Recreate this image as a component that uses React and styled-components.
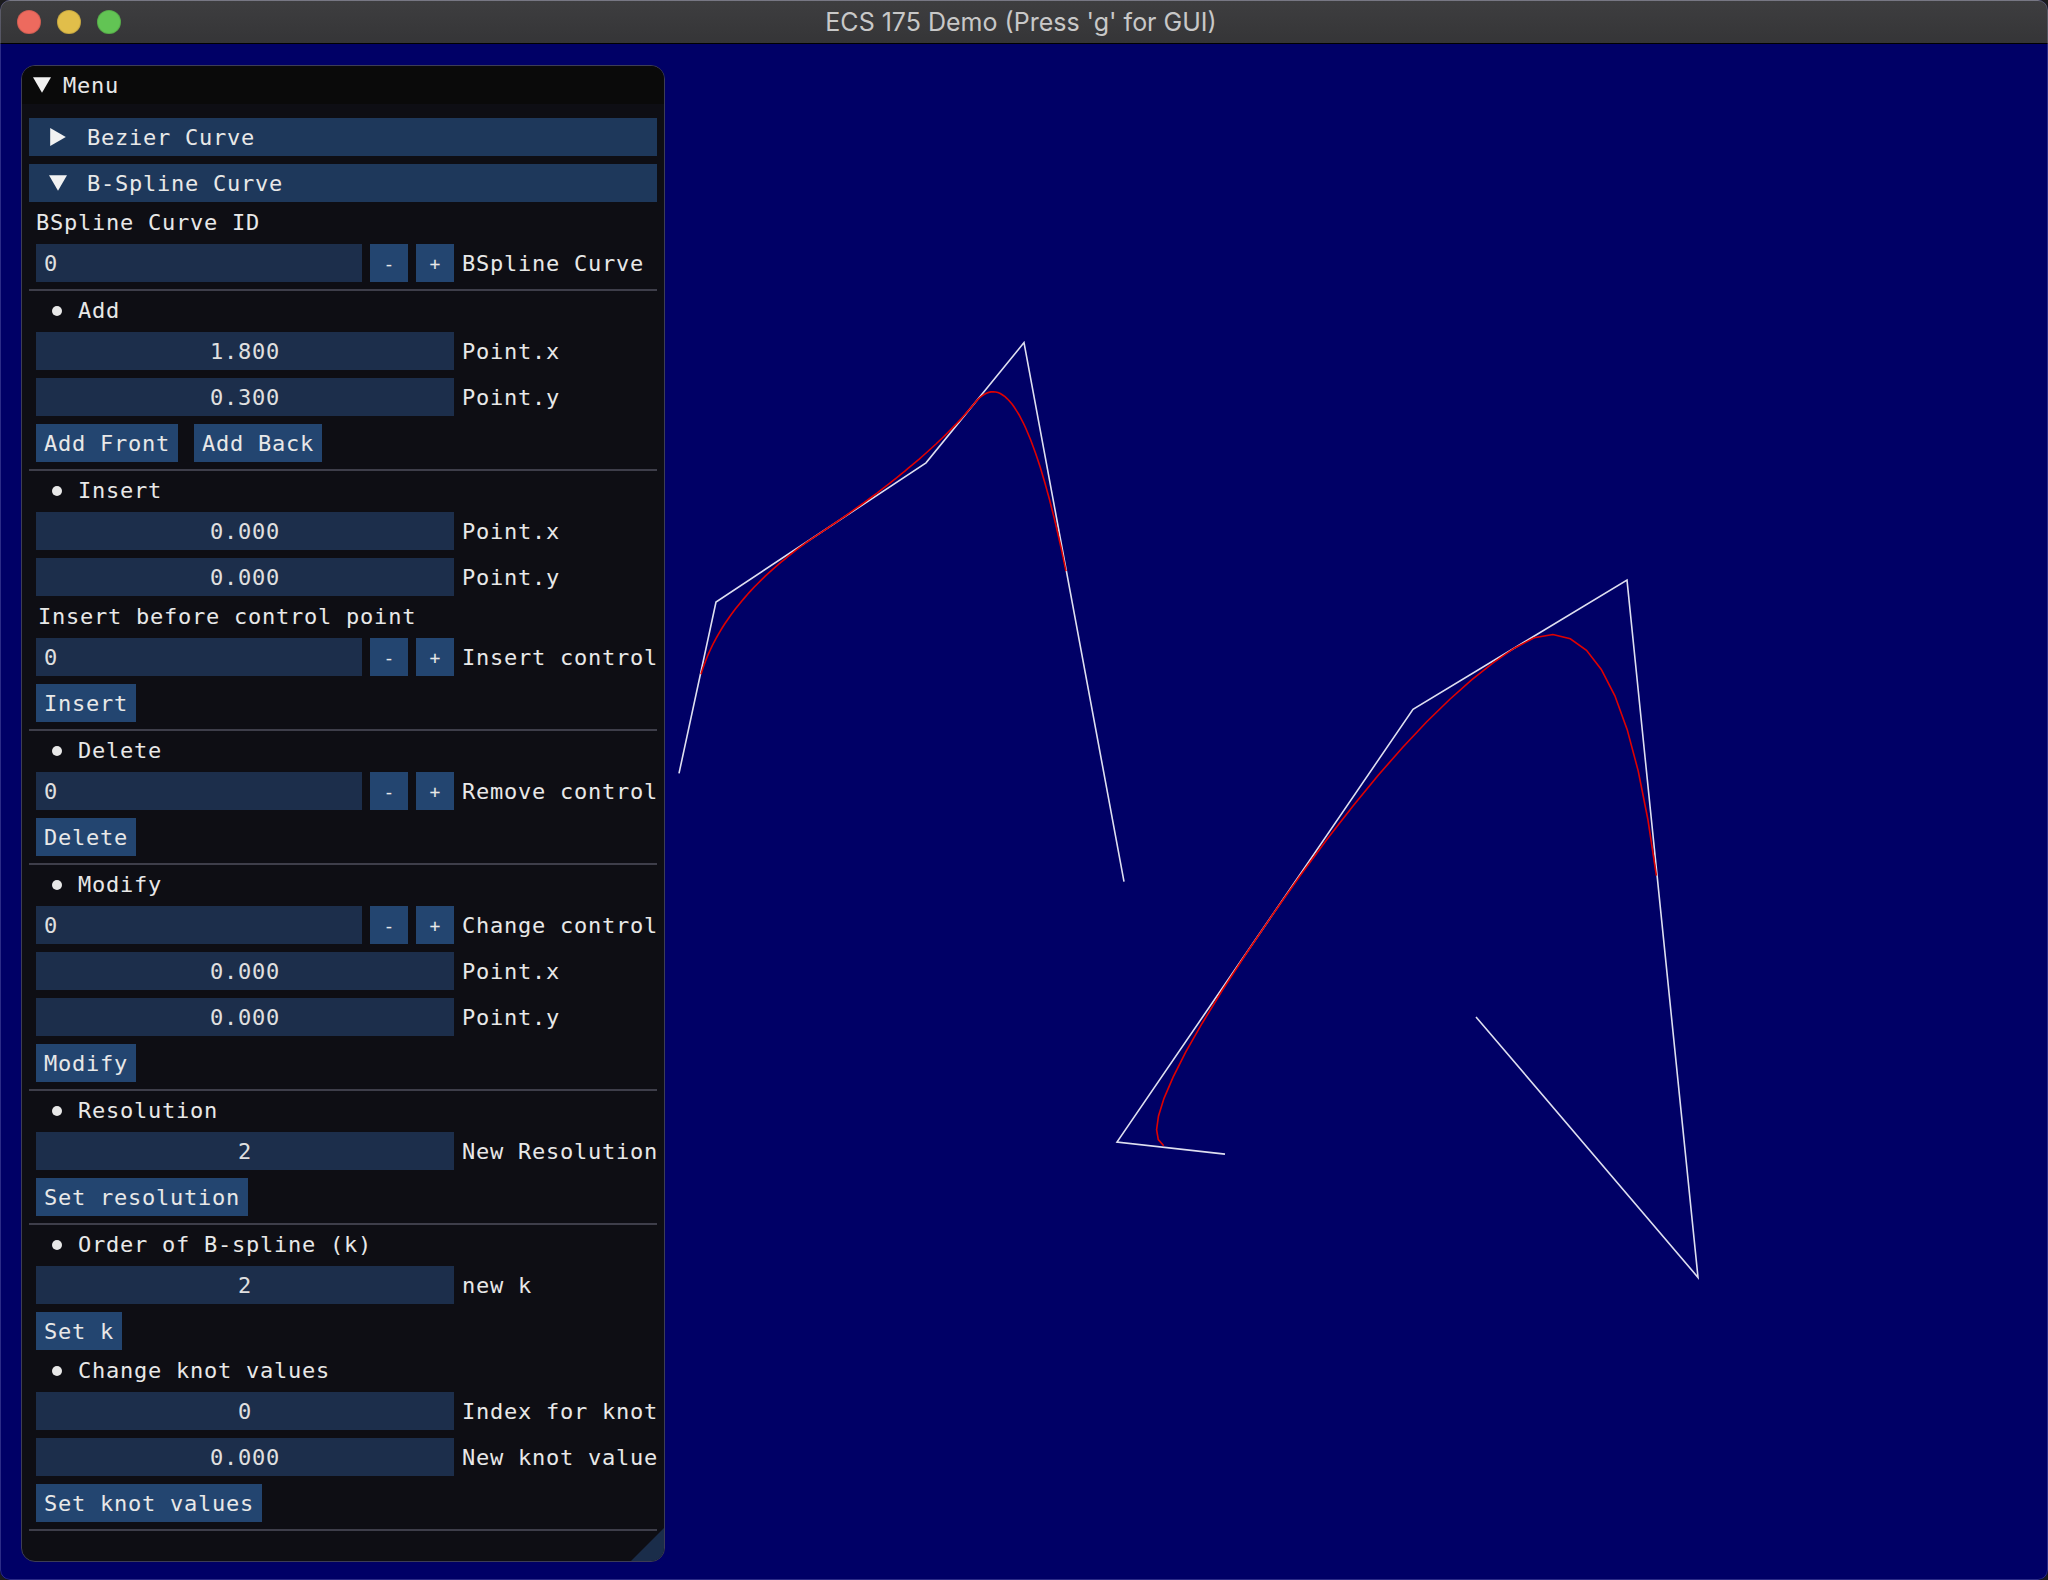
import React from "react";
import styled, { createGlobalStyle } from "styled-components";

// ImGui-ish palette (blended over the window background)
const C = {
    canvas: "#000066",
    windowBg: "#0e0e14",
    titleBg: "#0a0a0a",
    header: "#1e385b",
    frame: "#1c2e4b",
    button: "#234570",
    separator: "#3e3e4a",
    border: "#3d3d55",
    grip: "#1a2d4a",
    text: "#e8e8e8",
};

const MONO = `"DejaVu Sans Mono", "Liberation Mono", monospace`;

const GlobalStyle = createGlobalStyle`
    html, body {
        margin: 0;
        padding: 0;
        background: #1b1b1d;
    }
    body {
        width: 2048px;
        height: 1580px;
        overflow: hidden;
    }
`;

const Window = styled.div`
    position: relative;
    width: 2048px;
    height: 1580px;
    border-radius: 10px;
    overflow: hidden;
    display: flex;
    flex-direction: column;
    background: ${C.canvas};

    &::after {
        content: "";
        position: absolute;
        inset: 0;
        border-radius: 10px;
        border: 1px solid rgba(200, 200, 255, 0.22);
        pointer-events: none;
    }
`;

const TitleBar = styled.header`
    flex: 0 0 43px;
    display: grid;
    grid-template-columns: 1fr auto 1fr;
    align-items: center;
    border-bottom: 1px solid #000;
    background: linear-gradient(#3e3e40, #353537);
    box-shadow: inset 0 1px 0 rgba(255, 255, 255, 0.18);
`;

const Lights = styled.div`
    display: flex;
    gap: 16px;
    padding-left: 17px;
`;

const Light = styled.span`
    width: 24px;
    height: 24px;
    border-radius: 50%;
    background: ${p => p.$color};
    box-shadow: inset 0 0 0 1px rgba(0, 0, 0, 0.12);
`;

const WindowTitle = styled.span`
    font-family: Inter, "Liberation Sans", sans-serif;
    font-size: 25px;
    color: #c8c8c8;
    white-space: nowrap;
    margin-left: -6px;
`;

const Main = styled.main`
    position: relative;
    flex: 1 1 auto;
    padding: 21px;
`;

const Canvas = styled.svg`
    position: absolute;
    inset: 0;
    width: 100%;
    height: 100%;
`;

const Panel = styled.section`
    position: relative;
    z-index: 1;
    box-sizing: border-box;
    width: 644px;
    height: 1497px;
    border: 1px solid ${C.border};
    border-radius: 14px;
    background: ${C.windowBg};
    overflow: hidden;
    display: flex;
    flex-direction: column;
    font-family: ${MONO};
    font-size: 22px;
    letter-spacing: 0.76px;
    color: ${C.text};
`;

const PanelTitle = styled.div`
    flex: 0 0 38px;
    display: flex;
    align-items: center;
    gap: 8px;
    padding-left: 7px;
    background: ${C.titleBg};
`;

const Content = styled.div`
    display: flex;
    flex-direction: column;
    gap: 8px;
    padding: 14px 14px 0;
`;

const Header = styled.div`
    height: 38px;
    margin: 0 -7px;
    padding-left: 16px;
    display: flex;
    align-items: center;
    gap: 16px;
    background: ${C.header};
    white-space: pre;
`;

const TextRow = styled.div`
    height: 26px;
    line-height: 26px;
    padding-left: ${p => p.$indent || 0}px;
    display: flex;
    align-items: center;
    white-space: pre;
`;

const BulletSlot = styled.span`
    flex: 0 0 42px;
    display: flex;
    justify-content: center;
`;

const Dot = styled.span`
    width: 10px;
    height: 10px;
    border-radius: 50%;
    background: ${C.text};
`;

const Row = styled.div`
    height: 38px;
    display: flex;
    align-items: center;
    gap: ${p => p.$gap || 8}px;
    white-space: pre;
`;

const Field = styled.div`
    box-sizing: border-box;
    flex: 0 0 ${p => p.$width}px;
    height: 38px;
    display: flex;
    align-items: center;
    justify-content: ${p => (p.$center ? "center" : "flex-start")};
    padding: 0 8px;
    background: ${C.frame};
    color: #e0e0e0;
`;

const StepButton = styled.div`
    flex: 0 0 38px;
    height: 38px;
    display: flex;
    align-items: center;
    justify-content: center;
    background: ${C.button};
    font-size: 18px;
    letter-spacing: 0;
`;

const Label = styled.span`
    flex: 0 0 auto;
`;

const Button = styled.div`
    flex: 0 0 auto;
    height: 38px;
    padding: 0 8px;
    display: flex;
    align-items: center;
    background: ${C.button};
`;

const Separator = styled.div`
    height: 2px;
    margin: -1px -7px;
    background: ${C.separator};
`;

const Grip = styled.div`
    position: absolute;
    right: 0;
    bottom: 0;
    width: 33px;
    height: 33px;
    background: ${C.grip};
    clip-path: polygon(100% 0, 100% 100%, 0 100%);
`;

function Arrow({ open }) {
    // same geometry as ImGui's RenderArrow, font size 26
    const pts = open ? "13,20.8 4,5.2 22,5.2" : "20.8,13 5.2,22 5.2,4";
    return (
        <svg width="26" height="26" viewBox="0 0 26 26">
            <polygon points={pts} fill="#f2f2f2" />
        </svg>
    );
}

function Bullet({ children }) {
    return (
        <TextRow>
            <BulletSlot><Dot /></BulletSlot>
            {children}
        </TextRow>
    );
}

function Stepper({ value, label }) {
    return (
        <Row>
            <Field $width={326}>{value}</Field>
            <StepButton>-</StepButton>
            <StepButton>+</StepButton>
            <Label>{label}</Label>
        </Row>
    );
}

function Drag({ value, label }) {
    return (
        <Row>
            <Field $width={418} $center>{value}</Field>
            <Label>{label}</Label>
        </Row>
    );
}

// uniform quadratic B-spline, sampled over s in [from, to]
function bspline(pts, from, to, steps) {
    const segs = pts.length - 2;
    const out = [];
    for (let i = 0; i <= steps; i++) {
        const s = from + ((to - from) * i) / steps;
        const k = Math.min(Math.floor(s), segs - 1);
        const u = s - k;
        const b0 = 0.5 * (1 - u) * (1 - u);
        const b1 = 0.5 * (-2 * u * u + 2 * u + 1);
        const b2 = 0.5 * u * u;
        const [a, b, c] = [pts[k], pts[k + 1], pts[k + 2]];
        out.push(`${(b0 * a[0] + b1 * b[0] + b2 * c[0]).toFixed(1)},${(b0 * a[1] + b1 * b[1] + b2 * c[1]).toFixed(1)}`);
    }
    return out.join(" ");
}

const CURVE_A = [[679, 772], [716, 601], [926, 462], [1024, 342], [1124, 880]];
const CURVE_B = [[1476, 1015], [1698, 1275], [1627, 579], [1413, 708], [1117, 1140], [1225, 1152]];

const toPoints = (pts) => pts.map(p => p.join(",")).join(" ");

function Curves() {
    return (
        <Canvas viewBox="0 44 2048 1536" preserveAspectRatio="none">
            <polyline points={toPoints(CURVE_A)} fill="none" stroke="#dedff0" strokeWidth="1.6" />
            <polyline points={toPoints(CURVE_B)} fill="none" stroke="#dedff0" strokeWidth="1.6" />
            <polyline points={bspline(CURVE_A, 0.08, 2.92, 120)} fill="none" stroke="#e00000" strokeWidth="1.6" />
            <polyline points={bspline(CURVE_B.slice(1), 0.08, 2.92, 30)} fill="none" stroke="#e00000" strokeWidth="1.6" />
        </Canvas>
    );
}

export default function App() {
    return (
        <>
            <GlobalStyle />
            <Window>
                <TitleBar>
                    <Lights>
                        <Light $color="#ed6a5e" />
                        <Light $color="#e1be4a" />
                        <Light $color="#62c454" />
                    </Lights>
                    <WindowTitle>ECS 175 Demo (Press 'g' for GUI)</WindowTitle>
                    <span />
                </TitleBar>

                <Main>
                    <Curves />
                    <Panel>
                        <PanelTitle>
                            <Arrow open />
                            <span>Menu</span>
                        </PanelTitle>

                        <Content>
                            <Header><Arrow /><span>Bezier Curve</span></Header>
                            <Header><Arrow open /><span>B-Spline Curve</span></Header>

                            <TextRow>BSpline Curve ID</TextRow>
                            <Stepper value="0" label="BSpline Curve" />
                            <Separator />

                            <Bullet>Add</Bullet>
                            <Drag value="1.800" label="Point.x" />
                            <Drag value="0.300" label="Point.y" />
                            <Row $gap={16}>
                                <Button>Add Front</Button>
                                <Button>Add Back</Button>
                            </Row>
                            <Separator />

                            <Bullet>Insert</Bullet>
                            <Drag value="0.000" label="Point.x" />
                            <Drag value="0.000" label="Point.y" />
                            <TextRow $indent={2}>Insert before control point</TextRow>
                            <Stepper value="0" label="Insert control" />
                            <Row><Button>Insert</Button></Row>
                            <Separator />

                            <Bullet>Delete</Bullet>
                            <Stepper value="0" label="Remove control" />
                            <Row><Button>Delete</Button></Row>
                            <Separator />

                            <Bullet>Modify</Bullet>
                            <Stepper value="0" label="Change control" />
                            <Drag value="0.000" label="Point.x" />
                            <Drag value="0.000" label="Point.y" />
                            <Row><Button>Modify</Button></Row>
                            <Separator />

                            <Bullet>Resolution</Bullet>
                            <Drag value="2" label="New Resolution" />
                            <Row><Button>Set resolution</Button></Row>
                            <Separator />

                            <Bullet>Order of B-spline (k)</Bullet>
                            <Drag value="2" label="new k" />
                            <Row><Button>Set k</Button></Row>

                            <Bullet>Change knot values</Bullet>
                            <Drag value="0" label="Index for knot" />
                            <Drag value="0.000" label="New knot value" />
                            <Row><Button>Set knot values</Button></Row>
                            <Separator />
                        </Content>
                        <Grip />
                    </Panel>
                </Main>
            </Window>
        </>
    );
}
